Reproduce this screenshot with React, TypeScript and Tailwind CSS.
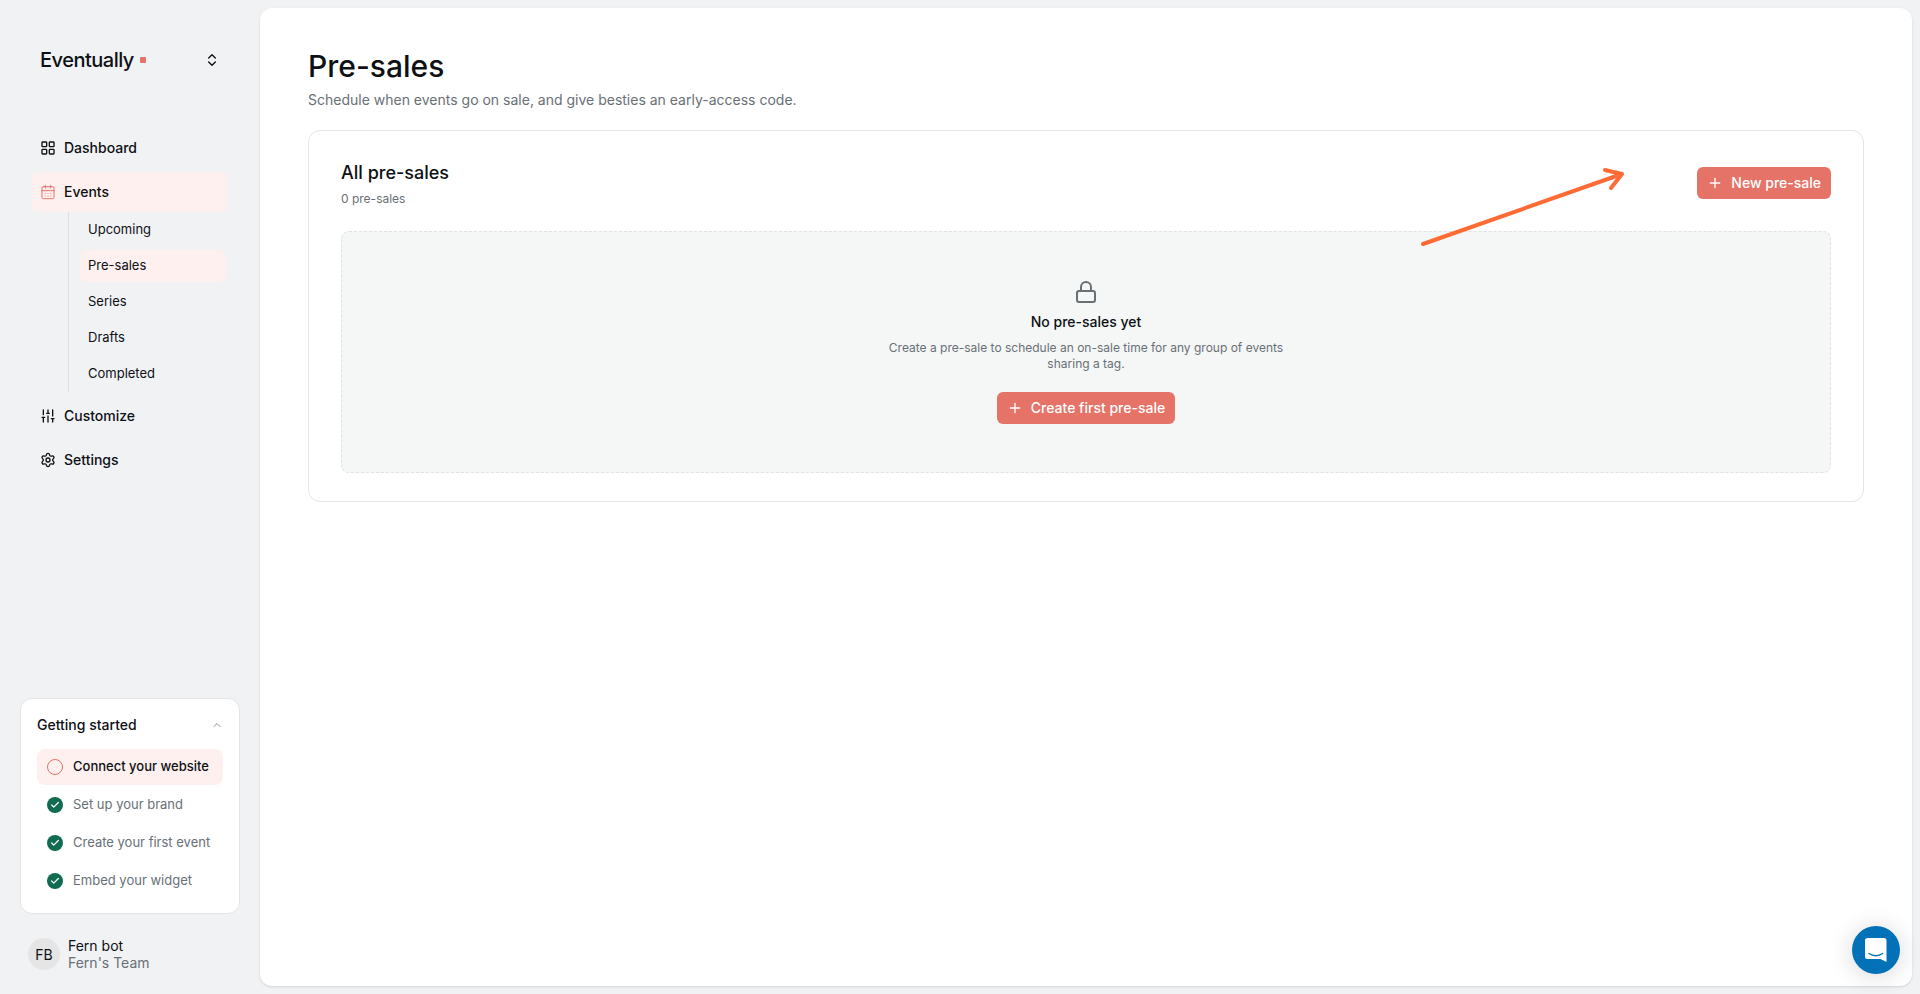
import { Calendar, CalendarDays, Check, ChevronsUpDown, ChevronUp, LayoutGrid, Lock, Plus, Settings, SlidersVertical } from 'lucide-react'

const eventLinks = ['Upcoming', 'Pre-sales', 'Series', 'Drafts', 'Completed']

const steps = [
  { label: 'Connect your website', done: false },
  { label: 'Set up your brand', done: true },
  { label: 'Create your first event', done: true },
  { label: 'Embed your widget', done: true },
]

function NavItem({ icon: Icon, label, active = false }: { icon: typeof Calendar; label: string; active?: boolean }) {
  return (
    <a
      href="#"
      className={`flex h-10 items-center gap-2 rounded-md px-2 text-sm font-medium ${active ? 'bg-[#fdf0ee]' : ''}`}
    >
      <Icon size={16} strokeWidth={active ? 1.5 : 2} className={active ? 'text-[#e57368]' : ''} />
      {label}
    </a>
  )
}

function PrimaryButton({ label }: { label: string }) {
  return (
    <button className="flex h-8 items-center gap-2 rounded-md bg-[#e57368] px-2.5 text-sm font-medium text-white">
      <span className="flex w-4 justify-center">
        <Plus size={16} strokeWidth={2} />
      </span>
      {label}
    </button>
  )
}

function GettingStarted() {
  return (
    <section className="rounded-xl border border-[#e3e4e6] bg-white px-4 pt-4 pb-3.5">
      <button className="mb-3.5 flex h-5 w-full items-center justify-between text-sm font-medium">
        Getting started
        <ChevronUp size={12} className="text-[#8d9196]" />
      </button>
      <ul className="flex flex-col gap-0.5">
        {steps.map((step) => (
          <li key={step.label}>
            <a
              href="#"
              className={`flex h-9 items-center gap-2.5 rounded-lg px-2.5 text-[13px] whitespace-nowrap ${
                step.done ? 'text-[#687076]' : 'bg-[#fdf0ee] font-medium'
              }`}
            >
              {step.done ? (
                <span className="flex size-4 shrink-0 items-center justify-center rounded-full bg-[#116b50] text-white">
                  <Check size={10} strokeWidth={3} />
                </span>
              ) : (
                <span className="size-4 shrink-0 rounded-full border border-[#e57368]" />
              )}
              {step.label}
            </a>
          </li>
        ))}
      </ul>
    </section>
  )
}

function Sidebar() {
  return (
    <aside className="flex w-[260px] shrink-0 flex-col px-5 pb-2">
      <button className="mt-10 mr-5 ml-5 flex h-10 items-center justify-between">
        <span className="flex items-center gap-1.5 text-xl font-medium tracking-tight">
          Eventually
          <span className="size-1.5 rounded-[1px] bg-[#e57368]" />
        </span>
        <ChevronsUpDown size={16} />
      </button>

      <nav className="mt-12 flex flex-col gap-1 px-3">
        <NavItem icon={LayoutGrid} label="Dashboard" />
        <div>
          <NavItem icon={CalendarDays} label="Events" active />
          <ul className="ml-9 border-l border-[#dcdee0] pr-0.5 pl-[11px]">
            {eventLinks.map((label) => (
              <li key={label} className="py-0.5">
                <a
                  href="#"
                  className={`flex h-8 items-center rounded-md px-2 text-[13px] ${label === 'Pre-sales' ? 'bg-[#fdf0ee]' : ''}`}
                >
                  {label}
                </a>
              </li>
            ))}
          </ul>
        </div>
        <NavItem icon={SlidersVertical} label="Customize" />
        <NavItem icon={Settings} label="Settings" />
      </nav>

      <div className="mt-auto">
        <GettingStarted />
        <button className="mt-2 flex h-16 items-center gap-2 px-2 text-left text-sm leading-[17px]">
          <span className="flex size-8 items-center justify-center rounded-full bg-[#e5e5e5]">FB</span>
          <span className="flex flex-col">
            <span>Fern bot</span>
            <span className="text-[#687076]">Fern's Team</span>
          </span>
        </button>
      </div>
    </aside>
  )
}

function EmptyState() {
  return (
    <div className="flex flex-col items-center rounded-lg border border-dashed border-[#dfe3e2] bg-[#f5f7f7] py-12 text-center">
      <Lock size={24} className="text-[#687076]" />
      <h3 className="mt-2 text-sm leading-5 font-medium">No pre-sales yet</h3>
      <p className="mt-2 max-w-[420px] text-xs leading-4 text-[#687076]">
        Create a pre-sale to schedule an on-sale time for any group of events
        <br />
        sharing a tag.
      </p>
      <div className="mt-5">
        <PrimaryButton label="Create first pre-sale" />
      </div>
    </div>
  )
}

export default function App() {
  return (
    <div className="flex min-h-screen bg-[#f1f2f4] font-['Inter',sans-serif] text-[#0d1014]">
      <Sidebar />
      <main className="my-2 mr-2 flex-1 rounded-xl bg-white px-12 pt-10 shadow-sm">
        <h1 className="text-3xl leading-9 font-medium">Pre-sales</h1>
        <p className="mt-1.5 text-sm leading-5 text-[#687076]">
          Schedule when events go on sale, and give besties an early-access code.
        </p>

        <section className="relative mt-5 rounded-xl border border-[#e3e5e7] px-8 pt-7 pb-7">
          <div className="mb-6 flex items-center justify-between">
            <div>
              <h2 className="text-lg leading-7 font-medium">All pre-sales</h2>
              <p className="mt-1 text-xs leading-4 text-[#687076]">0 pre-sales</p>
            </div>
            <PrimaryButton label="New pre-sale" />
          </div>
          <EmptyState />

          {/* pointer towards the new pre-sale button */}
          <svg
            className="pointer-events-none absolute top-9 right-[236px]"
            width="208"
            height="84"
            fill="none"
            stroke="#ff6b35"
            strokeWidth="4"
            strokeLinecap="round"
            strokeLinejoin="round"
          >
            <path d="M4 77 L203 7 M186 3 L203 7 L192 21" />
          </svg>
        </section>
      </main>

      <button
        aria-label="Open messenger"
        className="fixed right-5 bottom-5 flex size-12 items-center justify-center rounded-full bg-[#0371b8] shadow-[0_2px_24px_rgba(0,0,0,0.16)]"
      >
        <svg width="24" height="26" viewBox="0 0 24 26" fill="none">
          <path d="M3.500 1h16.500a2.500 2.500 0 0 1 2.500 2.500V25l-6-3H3.500A2.500 2.500 0 0 1 1 19.500v-16A2.500 2.500 0 0 1 3.500 1z" fill="#fff" />
          <path d="M5 16.500c4 3 9.500 3 13.500 0" stroke="#0371b8" strokeWidth="1.300" strokeLinecap="round" />
        </svg>
      </button>
    </div>
  )
}
